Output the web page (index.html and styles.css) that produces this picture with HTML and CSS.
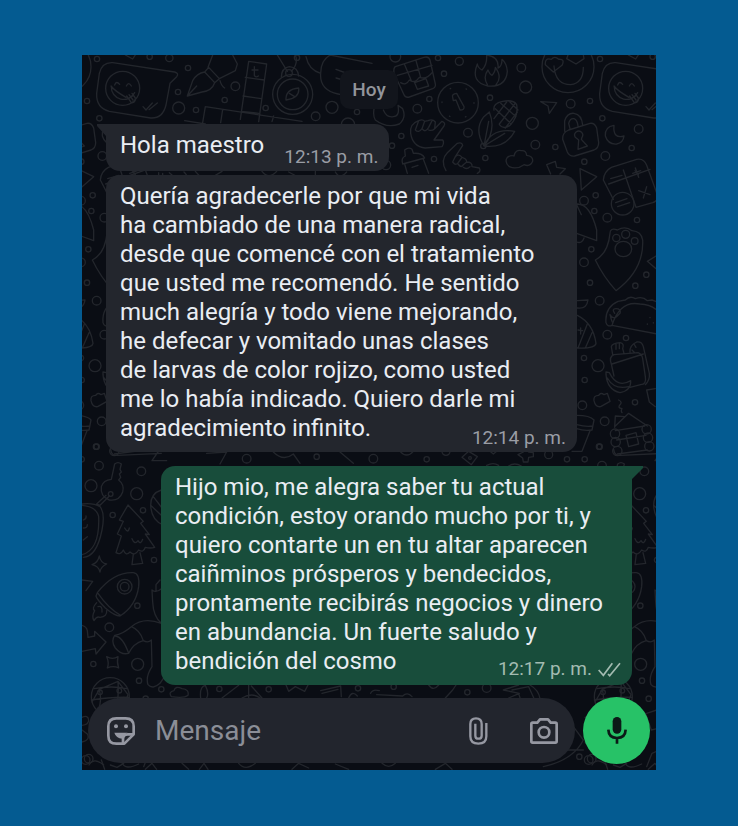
FILE: index.html
```html
<!DOCTYPE html>
<html lang="es">
<head>
    <meta charset="UTF-8">
    <meta name="viewport" content="width=device-width, initial-scale=1.0">
    <title>Chat</title>
    <link rel="stylesheet" href="styles.css">
</head>
<body>
    <main class="chat">
        <!-- Doodle wallpaper, the tile repeats sideways -->
        <svg class="wallpaper" viewBox="0 0 1722 2145" preserveAspectRatio="xMinYMin slice" aria-hidden="true">
            <g id="tile">
                <g transform="translate(0 -15)">
                    <path d="M92 38L278 66Q292 70 284 80L264 100L252 165Q242 206 206 204L82 184Q42 174 44 130L52 70Q60 36 92 38Z"/>
                    <circle cx="122" cy="115" r="51"/>
                    <path d="M87 108Q97 122 132 142M88 110A37 37 0 0 0 158 128M98 105q5-14 15-2M133 108q7-14 15 0M134 138l14 20q12 2 12-14l-10-14M141 134l12 16M183 170l9 10l19-21M201 179l25-20"/>
                    <path d="M316 138L332 92Q344 70 368 66L398 98Q390 122 360 126ZM316 138L344 108M368 66L380 52L412 86L398 98M378 52L392 15M412 86L460 62L466 42L452 15M414 92q4 16 14 22"/>
                    <path d="M500 34L554 42L530 215M500 34L475 208M490 82L547 90M483 138L538 146M478 184L530 190M370 170L660 214M370 170L362 218M422 178L416 218M308 212L370 222M517 50v26q4 8 12 2M510 60h18M575 198L570 215"/>
                    <circle cx="632" cy="133" r="60"/><circle cx="632" cy="133" r="46"/>
                    <path d="M612 150Q610 118 650 114Q654 144 612 150ZM622 130l16 10M598 82Q598 54 622 50Q648 52 650 78M616 64L586 15M628 64Q650 40 640 15"/>
                    <circle cx="621" cy="69" r="10"/>
                    <path d="M672 20Q680 60 716 70M745 15Q716 30 716 70Q712 120 768 132L778 134M745 15L870 40M762 58L800 72M762 84L784 90"/>
                    <circle cx="318" cy="54" r="8"/><circle cx="288" cy="126" r="8"/><circle cx="460" cy="109" r="13"/><circle cx="428" cy="150" r="8"/><circle cx="290" cy="174" r="18"/><circle cx="342" cy="180" r="8"/><circle cx="551" cy="174" r="8"/><circle cx="645" cy="23" r="8"/><circle cx="701" cy="199" r="13"/><circle cx="750" cy="172" r="18"/><circle cx="825" cy="186" r="8"/><circle cx="798" cy="224" r="20"/><circle cx="262" cy="24" r="11"/><circle cx="203" cy="20" r="8"/>
                    <path d="M130 15l22 12l8-12M150 362l10 12M230 368v16h12v-14M262 368l14 12M306 366q18 18 0 20M340 364l18 20M420 364l-30 18M540 364q20 26 44 0M620 366l30 16M700 364v16M760 366q14 24 34 0"/>
                </g>
                <g transform="translate(864 -15)">
                    <path d="M76 50L162 22Q176 18 180 30L196 102Q198 112 188 116L118 141Q106 144 102 134L72 70Q70 54 76 50ZM104 44L124 92M138 32L152 82M82 76L186 46M92 98q16 10 26-8q16 12 30-8q22 8 38-14M134 98L168 86L176 108L142 118Z"/>
                    <path d="M322 42Q300 96 354 108Q408 112 412 64Q410 40 396 28Q396 50 384 54Q388 20 350 15Q352 44 336 60Q324 54 322 42ZM352 104Q338 80 354 60Q360 74 366 76Q376 66 376 52Q398 82 378 104"/>
                    <circle cx="264" cy="158" r="61"/><circle cx="264" cy="158" r="48" stroke-dasharray="2 48"/>
                    <path d="M248 142Q244 132 260 130L282 170Q284 180 270 180L258 150L250 152Z"/>
                    <circle cx="594" cy="50" r="78"/>
                    <path d="M552 48Q556 104 602 104Q640 100 640 52M550 66L526 44Q524 22 544 28Q554 16 566 28Q586 26 576 46ZM618 42L590 26L594 15M618 42L642 26L640 15"/>
                    <path d="M372 180Q368 160 398 154Q430 148 440 164Q446 200 420 226Q400 240 388 224M376 176L424 222M392 160L438 200M416 152L444 180M372 206L410 156M388 222L434 162M406 234L442 186M342 288Q312 240 340 202L358 186Q380 240 342 288ZM342 288Q366 232 434 244Q406 296 342 288ZM342 288L356 214M342 288L404 250"/>
                    <circle cx="340" cy="288" r="8"/>
                    <path d="M512 155L560 158L538 190L534 168Z"/>
                    <path d="M596 240L660 220Q674 218 680 234L686 278Q686 294 672 300L614 318Q598 320 592 306L578 268Q576 248 596 240ZM584 244V212Q592 188 612 190Q636 194 638 226M600 236L596 220Q600 204 612 206Q622 210 624 228M616 262A12 12 0 1 1 636 262L634 268L652 288L624 298L626 270Z"/>
                    <path d="M732 226Q704 230 706 258Q714 284 740 282Q760 278 762 258Q728 268 732 226Z"/>
                    <path d="M122 250Q118 222 146 212Q158 206 164 214L174 212Q188 206 196 216L194 236L216 214Q228 218 222 228L192 270L218 270Q224 278 216 290L166 294Q128 290 122 250ZM146 212L136 240q10 10 20-4L164 214M156 236q10 14 20-4L186 212M176 240q10 4 18-4"/>
                    <path d="M228 362Q210 330 232 308L262 280Q276 276 278 286L256 320Q266 310 276 322Q290 326 290 336Q308 336 306 350L328 354Q334 364 322 370M256 320l-8 16q10 14 18 0l10-14M264 342q10 14 16 2l10-8M280 352q10 8 20-2"/>
                    <path d="M106 318L104 300Q116 290 126 298L130 310Q156 308 164 324L98 342Q92 324 106 318ZM104 342L112 370M160 328L176 370M126 352l18-6"/>
                    <path d="M418 350Q402 336 412 322Q424 314 432 318Q436 298 454 302Q468 300 470 316Q490 318 488 334Q480 352 462 344Q440 360 418 350Z"/>
                    <path d="M530 344L556 334L560 352L586 356L570 372M530 344L542 372M20 150Q4 190 16 210Q50 236 88 222Q110 204 98 176L84 166Q90 200 70 200Q50 204 40 180"/>
                    <path d="M630 356L680 380L634 420Z"/>
                    <circle cx="76" cy="20" r="16"/><circle cx="222" cy="71" r="8"/><circle cx="268" cy="34" r="12"/><circle cx="204" cy="24" r="8"/><circle cx="454" cy="53" r="13"/><circle cx="467" cy="111" r="18"/><circle cx="360" cy="143" r="8"/><circle cx="142" cy="176" r="13"/><circle cx="178" cy="147" r="8"/><circle cx="602" cy="161" r="13"/><circle cx="660" cy="153" r="8"/><circle cx="690" cy="27" r="8"/><circle cx="697" cy="205" r="8"/><circle cx="487" cy="220" r="18"/><circle cx="294" cy="248" r="13"/><circle cx="94" cy="258" r="8"/><circle cx="66" cy="287" r="8"/><circle cx="496" cy="284" r="13"/><circle cx="556" cy="291" r="8"/><circle cx="346" cy="324" r="8"/><circle cx="192" cy="327" r="8"/><circle cx="706" cy="318" r="13"/><circle cx="643" cy="335" r="8"/><circle cx="48" cy="345" r="14"/><circle cx="806" cy="237" r="13"/><circle cx="785" cy="294" r="8"/>
                </g>
                <g transform="translate(1464 345)">
                    <path d="M100 30Q102 4 124 -8L200 -32Q222 -36 230 -14L262 74Q266 92 248 98L198 112L160 0M100 30L130 88M116 42L240 -2M122 26l34-10M188 10l24-8M196 -6l10 28M206 62l34 12M230 50l-10 34M137 98l34-12M143 110l36-12"/>
                    <circle cx="158" cy="101" r="34"/>
                    <path d="M20 102Q60 100 80 180V212L20 190M20 216q16 6 22-12M20 104l14 30"/>
                    <path d="M120 190Q120 172 142 180Q166 166 186 182Q214 184 218 210Q222 300 138 362Q100 320 76 270Q114 250 120 190Z"/>
                    <circle cx="139" cy="204" r="11"/><circle cx="167" cy="193" r="12"/><circle cx="194" cy="213" r="10"/><ellipse cx="160" cy="237" rx="25" ry="23"/>
                    <path d="M258 258L232 274L258 296M22 392l32-2q-4 28-32 24M22 436Q70 460 78 520Q76 536 22 534M24 534L52 462M46 534L66 488M24 480l14 2M32 474v18"/>
                    <path d="M108 458Q104 412 144 394L166 390Q180 376 196 386Q218 378 232 392L246 390Q290 404 302 450M108 458Q112 472 126 466Q150 390 210 402Q270 404 290 470Q290 490 262 492L126 466M134 430q-10-14 4-14q16 0 12 14l-8 8q-12 12-22-4q6 24 8 22"/>
                    <path d="M240 442v1M232 462v1M250 458v1"/>
                    <path d="M124 582Q116 560 132 554L204 548Q216 552 218 566L226 620Q230 644 212 644L180 652M124 582L132 618M126 582L220 552M128 554L124 530Q126 520 150 518Q164 520 158 536L162 550M138 522v16M148 520v16M180 546Q178 526 200 516Q216 514 220 530L238 610Q240 630 226 644M192 522l6 10M186 540l8 8M108 614Q112 660 150 668Q184 662 182 632Q142 656 118 608L108 606ZM112 624q20 36 64 26"/>
                    <path d="M72 692Q70 676 86 676Q92 666 102 674L112 670L120 694L92 710Q76 712 72 692ZM146 690q12 6 4 14q-8 10 6 12q-4 6 0 12M230 660L256 656M230 660L238 696L256 710"/>
                    <path d="M136 768L176 730L232 768M134 772L136 738L164 740M136 782L224 768M140 810L228 796M142 852L232 840M168 796L198 788L206 822L176 830Z"/>
                    <circle cx="135" cy="791" r="14"/><circle cx="137" cy="816" r="14"/><circle cx="142" cy="843" r="14"/><circle cx="230" cy="778" r="14"/><circle cx="234" cy="803" r="14"/><circle cx="238" cy="829" r="14"/>
                    <path d="M20 736Q60 736 72 750L66 780Q44 784 20 776M60 782L36 844H6M20 764q30 8 48 4"/>
                    <circle cx="42" cy="92" r="13"/><circle cx="77" cy="76" r="8"/><circle cx="73" cy="123" r="8"/><circle cx="112" cy="143" r="13"/><circle cx="201" cy="150" r="8"/><circle cx="64" cy="238" r="8"/><circle cx="42" cy="277" r="13"/><circle cx="229" cy="314" r="8"/><circle cx="60" cy="338" r="8"/><circle cx="196" cy="347" r="8"/><circle cx="89" cy="392" r="13"/><circle cx="112" cy="494" r="13"/><circle cx="168" cy="504" r="8"/><circle cx="42" cy="564" r="8"/><circle cx="84" cy="587" r="18"/><circle cx="44" cy="630" r="8"/><circle cx="37" cy="706" r="13"/><circle cx="195" cy="697" r="8"/><circle cx="104" cy="754" r="13"/><circle cx="87" cy="830" r="8"/>
                </g>
                <g transform="translate(-6 1155)">
                    <path d="M104 72Q114 64 124 72L120 88l4 8l-6 6l4 10l-6 8Q134 134 128 156Q118 184 88 180Q60 170 64 140Q70 120 94 118Z"/>
                    <circle cx="92" cy="162" r="7"/>
                    <path d="M88 168L60 196L50 192L78 166M6 192Q40 188 60 200Q76 220 66 270Q50 350 10 352M6 196Q50 200 56 230Q60 330 6 344M10 240q10-4 8-12M10 264q12 0 12-10M10 300l12-10"/>
                    <path d="M144 195L118 240L130 244L112 282L124 288L108 338Q122 346 130 330Q138 350 150 336Q164 350 176 330Q190 340 196 322Q212 326 224 322L196 282L208 284L182 250L190 244ZM160 342L156 374L188 370L180 338M134 264q10 18 14 0M156 296q8 20 18 6q8 14 14-4"/>
                    <path d="M58 348Q62 370 80 372Q62 380 60 396Q56 378 36 374Q54 368 58 348ZM80 650Q98 660 114 650Q110 668 116 684Q100 676 82 684Q88 668 80 650Z"/>
                    <path d="M52 458Q100 396 160 398Q180 400 176 440Q168 498 120 528Q104 528 76 504Q50 478 48 468ZM54 460Q86 506 122 526M50 488Q34 506 44 512Q34 530 42 542Q50 528 60 532Q82 530 80 512M54 500q14-4 12 16"/>
                    <circle cx="134" cy="440" r="22"/><circle cx="134" cy="440" r="13"/>
                    <path d="M6 420L38 424L18 452M6 556Q20 560 22 572L24 592L44 588L44 574L78 606L48 642L46 626L6 634"/>
                    <path d="M154 560Q190 530 244 550M154 560Q128 582 104 586Q92 604 106 624Q124 646 146 640Q160 610 190 602Q204 610 214 600M106 588Q128 590 146 640M154 560Q180 570 190 602M214 600L216 680Q196 710 204 734Q218 750 240 730L260 700M218 486Q220 530 244 550M218 486L216 450Q228 460 244 446M228 454v-20l12-14M244 150Q212 160 212 196Q214 240 248 254M220 170l26 34M212 196l32 30"/>
                    <path d="M92 28Q94 48 112 46L244 40M216 62L238 30M216 62H260"/>
                    <circle cx="50" cy="20" r="8"/><circle cx="57" cy="77" r="13"/><circle cx="184" cy="94" r="13"/><circle cx="33" cy="137" r="18"/><circle cx="170" cy="161" r="18"/><circle cx="189" cy="211" r="8"/><circle cx="98" cy="225" r="8"/><circle cx="222" cy="360" r="8"/><circle cx="172" cy="497" r="8"/><circle cx="88" cy="562" r="13"/><circle cx="40" cy="672" r="8"/><circle cx="173" cy="673" r="18"/><circle cx="177" cy="722" r="8"/>
                </g>
                <g transform="translate(0 1875)">
                    <circle cx="85" cy="50" r="57"/>
                    <path d="M36 26Q90 16 134 26M30 66L52 28L108 4L138 44L120 90M52 28Q60 60 50 88M108 4Q112 50 100 92M28 60Q90 50 142 52"/>
                    <circle cx="54" cy="37" r="7"/><circle cx="112" cy="32" r="7"/>
                    <path d="M268 50Q258 36 276 32Q280 16 300 26Q322 28 318 46Q306 56 268 50ZM356 54Q352 20 370 16Q382 40 374 54M420 54L470 16M500 16V54M480 54Q510 36 534 54M508 18L540 54M612 15L620 34L640 20L668 34L678 15M716 32L776 18L778 50M720 40L768 28M800 54q10-24 26-6M866 40q6-14 26-8M884 44L962 48Q976 34 990 50M1040 15q14 20 30 0M1090 54L1112 30L1122 15M1264 30L1310 15M1264 30L1312 40L1280 54M1290 30L1340 20L1358 60M1344 15Q1370 30 1374 56M1310 40L1320 74"/>
                    <circle cx="238" cy="28" r="8"/><circle cx="412" cy="27" r="8"/><circle cx="560" cy="28" r="8"/><circle cx="828" cy="25" r="8"/><circle cx="935" cy="20" r="8"/><circle cx="1156" cy="37" r="8"/><circle cx="1214" cy="24" r="13"/><circle cx="20" cy="236" r="13"/>
                    <path d="M0 112q18-8 20 8q0 14-20 16M0 186Q26 180 16 162L0 150M58 240L68 268M120 248q10 24 50 4M190 268l20-18l14 18M300 250L320 268M352 268L366 250L378 268M470 250q20 24 50 0M630 268l20-18l30 14M760 252L800 268M900 250q20 18 40 0M1060 268L1090 250L1110 268"/>
                </g>
                <g transform="translate(1074 1785)">
                    <path d="M310 350Q400 330 430 270L400 230M370 300L430 300M456 345Q470 320 500 345M520 345L540 352L560 340M620 190L650 180M616 190L634 240L650 236M620 350l16-40l14-6"/>
                    <circle cx="418" cy="320" r="8"/><circle cx="446" cy="330" r="13"/><circle cx="626" cy="146" r="8"/>
                </g>
                <g transform="translate(1074 1065)">
                    <path d="M66 142L86 124L112 140L94 164ZM234 134l16-8l-4-8h18l2 8l14 2v12l-14 2l-2 14h-14l-2-12ZM150 124l10 8l10-8M140 166q20-10 36 0M206 168q18-12 38 0M-120 124q20 22 40 0M-300 126L-260 160M-500 126q30 30 60 6L-420 160M-700 130L-640 126L-660 162"/>
                    <circle cx="90" cy="144" r="4"/><circle cx="18" cy="124" r="12"/><circle cx="326" cy="134" r="12"/><circle cx="381" cy="148" r="8"/><circle cx="434" cy="148" r="8"/><circle cx="-40" cy="148" r="8"/><circle cx="-200" cy="146" r="13"/><circle cx="-370" cy="140" r="8"/><circle cx="-580" cy="146" r="13"/>
                </g>
            </g>
            <use href="#tile" x="-1509"/>
            <use href="#tile" x="1509"/>
        </svg>

        <div class="day">Hoy</div>

        <div class="bubble received tail short">
            <p>Hola maestro</p>
            <time>12:13 p. m.</time>
        </div>

        <div class="bubble received long">
            <p>Quería agradecerle por que mi vida<br>
            ha cambiado de una manera radical,<br>
            desde que comencé con el tratamiento<br>
            que usted me recomendó. He sentido<br>
            much alegría y todo viene mejorando,<br>
            he defecar y vomitado unas clases<br>
            de larvas de color rojizo, como usted<br>
            me lo había indicado. Quiero darle mi<br>
            agradecimiento infinito.</p>
            <time>12:14 p. m.</time>
        </div>

        <div class="bubble sent tail long">
            <p>Hijo mio, me alegra saber tu actual<br>
            condición, estoy orando mucho por ti, y<br>
            quiero contarte un en tu altar aparecen<br>
            caiñminos prósperos y bendecidos,<br>
            prontamente recibirás negocios y dinero<br>
            en abundancia. Un fuerte saludo y<br>
            bendición del cosmo</p>
            <time>12:17 p. m.
                <svg class="checks" viewBox="0 0 69 45" aria-hidden="true"><path d="M2 24L16 40L43 4M30 36L35 41L66 4"/></svg>
            </time>
        </div>

        <form class="composer">
            <div class="field">
                <button type="button" aria-label="Stickers">
                    <svg class="sticker" viewBox="0 0 84 84">
                        <path d="M28 4H56Q80 4 80 28V52L52 80H28Q4 80 4 56V28Q4 4 28 4Z"/>
                        <path d="M48 80V66Q48 52 62 52H80"/>
                        <path class="fill" d="M22 47H62Q50 51 46 65Q27 64 22 47Z"/>
                        <circle class="fill" cx="27" cy="28" r="6"/>
                        <circle class="fill" cx="57" cy="28" r="6"/>
                    </svg>
                </button>
                <input type="text" placeholder="Mensaje" aria-label="Mensaje">
                <button type="button" aria-label="Adjuntar">
                    <svg class="clip" viewBox="0 0 57 84">
                        <path d="M52 18V58Q52 80 28 80Q4 80 4 58V21Q4 4 21 4Q38 4 38 21V56Q38 65 28 65Q19 65 19 56V20"/>
                    </svg>
                </button>
                <button type="button" aria-label="Cámara">
                    <svg class="camera" viewBox="0 0 84 78">
                        <path d="M8 14H22L30 4H54L62 14H76Q80 14 80 18V70Q80 74 76 74H8Q4 74 4 70V18Q4 14 8 14Z"/>
                        <circle cx="42" cy="43" r="16"/>
                    </svg>
                </button>
            </div>
            <button class="mic" type="button" aria-label="Grabar audio">
                <svg viewBox="0 0 60 81">
                    <rect class="fill" x="17" y="0" width="26" height="50" rx="13"/>
                    <path d="M4 38Q5 63 30 63Q55 63 56 38M30 63V80"/>
                </svg>
            </button>
        </form>
    </main>
</body>
</html>
```
FILE: styles.css
```css
* {
    box-sizing: border-box;
}

body {
    margin: 0;
    padding: 55px 82px 56px;
    min-height: 100vh;
    display: flex;
    background-color: #045b91;
    font-family: Roboto, sans-serif;
}

.chat {
    position: relative;
    flex: 1;
    display: flex;
    flex-direction: column;
    align-items: flex-start;
    padding: 15px 6px 6px;
    background-color: #0a0d14;
    overflow: hidden;
}

.wallpaper {
    position: absolute;
    top: 0;
    left: 0;
    width: 100%;
    height: 100%;
    fill: none;
    stroke: #23262c;
    stroke-width: 4;
    stroke-linecap: round;
    stroke-linejoin: round;
}

.day {
    position: relative;
    align-self: center;
    padding: 0 12px;
    margin-bottom: 15px;
    border-radius: 10px;
    background-color: #12151c;
    color: #92959b;
    font-size: 19px;
    font-weight: 500;
    line-height: 39px;
}

.bubble {
    position: relative;
    padding: 7px 11px 3px 14px;
    border-radius: 14px;
    color: #e9edf3;
    font-size: 24px;
    line-height: 29px;
}

.bubble p {
    margin: 0 0 6px;
}

.bubble time {
    align-self: end;
    justify-self: end;
    font-size: 19px;
    line-height: 22px;
}

.short {
    display: flex;
    gap: 20px;
    min-height: 47px;
    margin-bottom: 4px;
}

/* text and time share one cell, the time sits in its bottom corner */
.long {
    display: grid;
    width: calc(100% - 91px);
}

.long p,
.long time {
    grid-area: 1 / 1;
}

.received {
    margin-left: 18px;
    background-color: #23262d;
}

.received time {
    color: #9a9da5;
}

.sent {
    align-self: flex-end;
    margin: 14px 18px 12px 0;
    background-color: #184d3b;
}

.sent time {
    display: flex;
    align-items: center;
    gap: 6px;
    margin-bottom: 2px;
    color: #a3bbb1;
}

.tail::before {
    content: "";
    position: absolute;
    top: 0;
    width: 24px;
    height: 14px;
    background-color: inherit;
}

.received.tail::before {
    left: -9px;
    clip-path: polygon(0 0, 100% 0, 100% 100%, 9px 100%, 9px 12px, 0 2px);
}

.sent.tail::before {
    right: -11px;
    clip-path: polygon(0 0, 100% 0, 100% 2px, 13px 13px, 13px 100%, 0 100%);
}

.checks {
    width: 23px;
    height: 15px;
    fill: none;
    stroke: #a3bbb1;
    stroke-width: 5;
}

.composer {
    position: relative;
    display: flex;
    align-items: center;
    gap: 8px;
    width: 100%;
    margin-top: auto;
}

.field {
    flex: 1;
    min-width: 0;
    display: flex;
    align-items: center;
    height: 65px;
    padding: 0 17px 0 19px;
    border-radius: 33px;
    background-color: #22252d;
}

.field input {
    flex: 1;
    min-width: 0;
    margin: 0 20px;
    padding: 0;
    border: 0;
    outline: 0;
    background: none;
    color: #e9edf3;
    font: 28px Roboto, sans-serif;
}

.field input::placeholder {
    color: #8b8e97;
    opacity: 1;
}

button {
    display: flex;
    flex-shrink: 0;
    padding: 0;
    border: 0;
    background: none;
    cursor: pointer;
}

button svg {
    fill: none;
    stroke: #9698a2;
    stroke-width: 8;
    stroke-linejoin: round;
}

.field .fill {
    fill: #9698a2;
    stroke: none;
}

.sticker {
    width: 28px;
    height: 28px;
}

.clip {
    width: 19px;
    height: 28px;
    margin-right: 42px;
    stroke-width: 7;
}

.camera {
    width: 28px;
    height: 26px;
}

.mic {
    align-items: center;
    justify-content: center;
    width: 67px;
    height: 67px;
    border-radius: 50%;
    background-color: #27c267;
}

.mic svg {
    width: 20px;
    height: 27px;
    stroke: #0b1a17;
}

.mic .fill {
    fill: #0b1a17;
    stroke: none;
}
```
